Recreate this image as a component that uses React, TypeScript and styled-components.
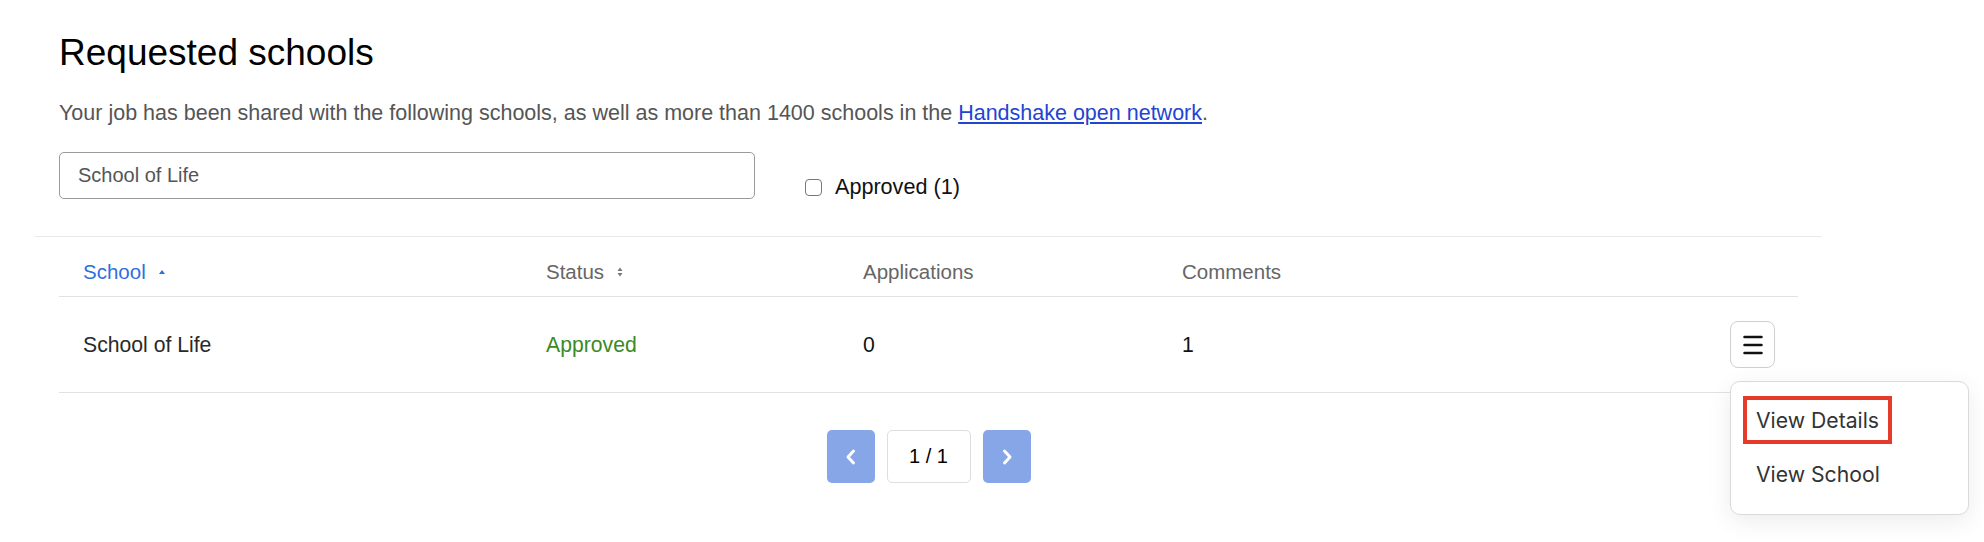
import styled, { createGlobalStyle } from "styled-components";
import { FC } from "react";

const GlobalStyle = createGlobalStyle`
	html, body {
		margin: 0;
		padding: 0;
		background: #ffffff;
		font-family: "Liberation Sans", Arial, sans-serif;
	}
`;

const Page = styled.div`
	box-sizing: border-box;
	min-height: 542px;
	padding-left: 35px;
`;

const Card = styled.section`
	width: 1787px;
`;

const Intro = styled.div`
	display: flex;
	flex-direction: column;
	padding: 31px 24px 0;
`;

const Title = styled.h2`
	margin: 0;
	font-size: 37px;
	line-height: 44px;
	font-weight: 400;
	color: #000;
`;

const Lead = styled.p`
	margin: 26px 0 0;
	font-size: 21.5px;
	line-height: 24px;
	color: #555;
`;

const Link = styled.a`
	color: #1f45d1;
	text-decoration: underline;
`;

const Controls = styled.div`
	display: flex;
	align-items: flex-end;
	gap: 50px;
	margin-top: 27px;
	margin-bottom: 37px;
`;

const Search = styled.input`
	box-sizing: border-box;
	width: 696px;
	height: 47px;
	padding: 0 18px;
	border: 1px solid #9a9a9a;
	border-radius: 5px;
	font-family: inherit;
	font-size: 20px;
	color: #555;
	outline: none;
`;

const CheckLabel = styled.label`
	display: flex;
	align-items: center;
	gap: 13px;
	height: 24px;
	font-size: 21.6px;
	color: #111;
`;

const Box = styled.span`
	box-sizing: border-box;
	width: 17px;
	height: 17px;
	border: 1.5px solid #777;
	border-radius: 4px;
	background: #fff;
`;

const TableSection = styled.div`
	border-top: 1px solid #e9e9e9;
	padding: 0 24px;
`;

const Row = styled.div<{ $head?: boolean }>`
	box-sizing: border-box;
	display: grid;
	grid-template-columns: 463px 317px 319px 1fr auto;
	align-items: center;
	height: ${(p) => (p.$head ? "60px" : "96px")};
	padding: ${(p) => (p.$head ? "10px 24px 0 24px" : "0 23px 0 24px")};
	border-bottom: 1px solid #e2e2e2;
`;

const HeadCell = styled.div<{ $active?: boolean }>`
	display: flex;
	align-items: center;
	gap: 12px;
	font-size: 20.5px;
	color: ${(p) => (p.$active ? "#2f6fde" : "#666")};
`;

const Cell = styled.div<{ $tone?: "green" | "dark" | "black" }>`
	font-size: 21.2px;
	color: ${(p) =>
		p.$tone === "green" ? "#3b8a26" : p.$tone === "black" ? "#111" : "#2a2a2a"};
`;

const ActionCell = styled.div`
	position: relative;
	justify-self: end;
`;

const MenuButton = styled.button`
	box-sizing: border-box;
	display: flex;
	align-items: center;
	justify-content: center;
	width: 45px;
	height: 47px;
	padding: 0;
	border: 1px solid #cfcfcf;
	border-radius: 8px;
	background: #fff;
`;

const Menu = styled.div`
	position: absolute;
	top: 60px;
	left: 0;
	box-sizing: border-box;
	width: 239px;
	display: flex;
	flex-direction: column;
	align-items: flex-start;
	gap: 6px;
	padding: 14px 12px 16px;
	background: #fff;
	border: 1px solid #dadada;
	border-radius: 10px;
	box-shadow: 0 6px 24px rgba(0, 0, 0, 0.08);
	z-index: 2;
`;

const MenuItem = styled.div<{ $marked?: boolean }>`
	box-sizing: border-box;
	display: flex;
	align-items: center;
	height: 48px;
	padding: 0 9px;
	border: 4px solid ${(p) => (p.$marked ? "#e63a2b" : "transparent")};
	font-family: Inter, "Liberation Sans", sans-serif;
	font-size: 21.2px;
	color: #333;
`;

const Pager = styled.div`
	display: flex;
	justify-content: center;
	gap: 12px;
	margin-top: 37px;
`;

const PageArrow = styled.button`
	display: flex;
	align-items: center;
	justify-content: center;
	width: 48px;
	height: 53px;
	padding: 0;
	border: none;
	border-radius: 5px;
	background: #86a6e8;
`;

const PageCount = styled.div`
	box-sizing: border-box;
	display: flex;
	align-items: center;
	justify-content: center;
	width: 84px;
	height: 53px;
	border: 1px solid #dedede;
	border-radius: 5px;
	font-size: 20px;
	color: #000;
`;

const SortUp: FC = () => (
	<svg width="8" height="6" viewBox="0 0 8 6">
		<path d="M4 1 L7 5 L1 5 Z" fill="#2f6fde" />
	</svg>
);

const SortBoth: FC = () => (
	<svg width="8" height="12" viewBox="0 0 8 12">
		<path d="M4 1.5 L6.5 5 L1.5 5 Z" fill="#777" />
		<path d="M4 10.5 L6.5 7 L1.5 7 Z" fill="#777" />
	</svg>
);

const Hamburger: FC = () => (
	<svg width="20" height="20" viewBox="0 0 20 20">
		<g stroke="#111" strokeWidth="2.5" strokeLinecap="round">
			<line x1="1.5" y1="2" x2="18.5" y2="2" />
			<line x1="1.5" y1="10" x2="18.5" y2="10" />
			<line x1="1.5" y1="18" x2="18.5" y2="18" />
		</g>
	</svg>
);

const Chevron: FC<{ dir: "left" | "right" }> = ({ dir }) => (
	<svg width="14" height="18" viewBox="0 0 14 18">
		<path
			d={dir === "left" ? "M9.5 3 L4 9 L9.5 15" : "M4.5 3 L10 9 L4.5 15"}
			fill="none"
			stroke="#fff"
			strokeWidth="3"
			strokeLinecap="round"
			strokeLinejoin="round"
		/>
	</svg>
);

export default function App() {
	return (
		<Page>
			<GlobalStyle />
			<Card>
				<Intro>
					<Title>Requested schools</Title>
					<Lead>
						Your job has been shared with the following schools, as well as more
						than 1400 schools in the <Link href="#">Handshake open network</Link>.
					</Lead>
					<Controls>
						<Search defaultValue="School of Life" />
						<CheckLabel>
							<Box />
							Approved (1)
						</CheckLabel>
					</Controls>
				</Intro>

				<TableSection>
					<Row $head>
						<HeadCell $active>
							School <SortUp />
						</HeadCell>
						<HeadCell>
							Status <SortBoth />
						</HeadCell>
						<HeadCell>Applications</HeadCell>
						<HeadCell>Comments</HeadCell>
					</Row>
					<Row>
						<Cell>School of Life</Cell>
						<Cell $tone="green">Approved</Cell>
						<Cell $tone="black">0</Cell>
						<Cell $tone="black">1</Cell>
						<ActionCell>
							<MenuButton>
								<Hamburger />
							</MenuButton>
							<Menu>
								<MenuItem $marked>View Details</MenuItem>
								<MenuItem>View School</MenuItem>
							</Menu>
						</ActionCell>
					</Row>
					<Pager>
						<PageArrow>
							<Chevron dir="left" />
						</PageArrow>
						<PageCount>1 / 1</PageCount>
						<PageArrow>
							<Chevron dir="right" />
						</PageArrow>
					</Pager>
				</TableSection>
			</Card>
		</Page>
	);
}
